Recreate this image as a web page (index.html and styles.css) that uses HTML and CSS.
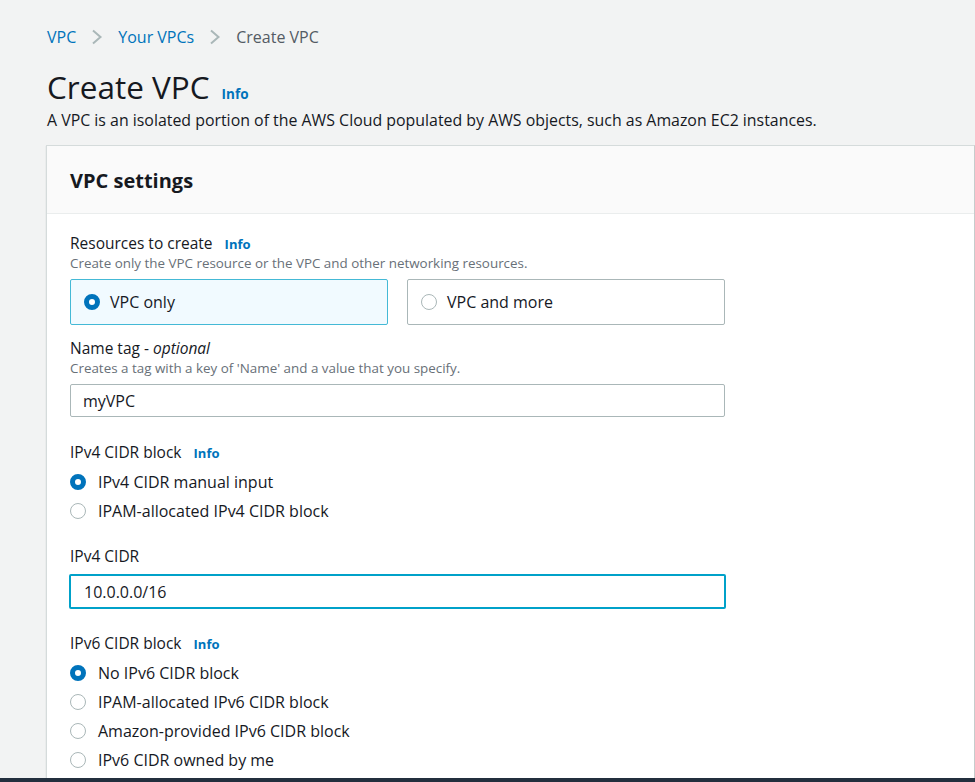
FILE: index.html
```html
<!DOCTYPE html>
<html lang="en">
<head>
<meta charset="utf-8">
<title>Create VPC</title>
<link rel="stylesheet" href="styles.css">
</head>
<body>
<div class="page">
  <nav class="crumbs">
    <a class="crumb-link">VPC</a>
    <svg class="chev" viewBox="0 0 12 16" width="12" height="16"><path d="M2 1.5l7.5 6.5-7.5 6.5" fill="none" stroke="#aab7b8" stroke-width="2"/></svg>
    <a class="crumb-link">Your VPCs</a>
    <svg class="chev" viewBox="0 0 12 16" width="12" height="16"><path d="M2 1.5l7.5 6.5-7.5 6.5" fill="none" stroke="#aab7b8" stroke-width="2"/></svg>
    <span class="crumb-current">Create VPC</span>
  </nav>
  <h1 class="title">Create VPC<span class="info info-title">Info</span></h1>
  <p class="lead">A VPC is an isolated portion of the AWS Cloud populated by AWS objects, such as Amazon EC2 instances.</p>

  <section class="panel">
    <header class="panel-head"><h2>VPC settings</h2></header>
    <div class="panel-body">
      <div class="field f-resources">
        <div class="label">Resources to create <span class="info">Info</span></div>
        <div class="desc">Create only the VPC resource or the VPC and other networking resources.</div>
        <div class="tiles">
          <div class="tile selected"><span class="radio on"></span><span>VPC only</span></div>
          <div class="tile"><span class="radio"></span><span>VPC and more</span></div>
        </div>
      </div>

      <div class="field f-name">
        <div class="label">Name tag - <em>optional</em></div>
        <div class="desc">Creates a tag with a key of 'Name' and a value that you specify.</div>
        <div class="input">myVPC</div>
      </div>

      <div class="field f-v4block">
        <div class="label">IPv4 CIDR block <span class="info">Info</span></div>
        <div class="radios">
          <div class="radio-row"><span class="radio on"></span>IPv4 CIDR manual input</div>
          <div class="radio-row"><span class="radio"></span>IPAM-allocated IPv4 CIDR block</div>
        </div>
      </div>

      <div class="field f-v4cidr">
        <div class="label">IPv4 CIDR</div>
        <div class="input focus">10.0.0.0/16</div>
      </div>

      <div class="field f-v6block">
        <div class="label">IPv6 CIDR block <span class="info">Info</span></div>
        <div class="radios">
          <div class="radio-row"><span class="radio on"></span>No IPv6 CIDR block</div>
          <div class="radio-row"><span class="radio"></span>IPAM-allocated IPv6 CIDR block</div>
          <div class="radio-row"><span class="radio"></span>Amazon-provided IPv6 CIDR block</div>
          <div class="radio-row"><span class="radio"></span>IPv6 CIDR owned by me</div>
        </div>
      </div>
    </div>
  </section>
</div>
<div class="footer-bar"></div>
</body>
</html>
```

FILE: styles.css
```css
html, body {
  margin: 0;
  padding: 0;
  height: 100%;
  overflow: hidden;
}
body {
  background: #f2f3f3;
  font-family: "Open Sans", "Noto Sans", sans-serif;
  color: #16191f;
  position: relative;
}
.page {
  padding: 27px 0 0 46px;
}
.crumbs {
  display: flex;
  align-items: center;
  gap: 15px;
  font-size: 16px;
  line-height: 20px;
  padding-left: 1px;
}
.crumb-link { color: #0073bb; }
.crumb-current { color: #545b64; }
.chev { display: block; }
.title {
  margin: 20px 0 0 1px;
  font-size: 31.5px;
  line-height: 40px;
  height: 40px;
  font-weight: 400;
}
.info {
  color: #0073bb;
  font-weight: 700;
  font-size: 13px;
  margin-left: 8px;
  line-height: 1;
}
.title .info { margin-left: 12px; font-size: 13.5px; }
.lead {
  margin: 3px 0 0 1px;
  font-size: 15.9px;
  line-height: 20px;
  height: 20px;
}
.panel {
  margin-top: 15px;
  background: #fff;
  border: 1px solid #d5dbdb;
  border-right-color: #c6cccc;
  box-shadow: 0 1px 1px rgba(0,28,36,0.2);
  height: 700px;
}
.panel-head {
  background: #fafafa;
  border-bottom: 1px solid #eaeded;
  height: 67px;
  display: flex;
  align-items: center;
  padding-left: 23px;
}
.panel-head h2 {
  margin: 0;
  font-size: 20px;
  font-weight: 700;
  line-height: 24px;
  padding-top: 2px;
}
.panel-body {
  padding: 19px 0 0 23px;
  width: 655px;
}
.label {
  font-size: 15.5px;
  line-height: 20px;
  height: 20px;
}
.label em { font-style: italic; }
.desc {
  font-size: 13.4px;
  line-height: 16px;
  color: #687078;
  margin-top: 2px;
}
.tiles {
  display: grid;
  grid-template-columns: 318px 318px;
  gap: 19px;
  margin-top: 8px;
}
.tile {
  height: 44px;
  border: 1px solid #aab7b8;
  border-radius: 2px;
  display: flex;
  align-items: center;
  gap: 10px;
  padding-left: 13px;
  font-size: 16px;
}
.tile.selected {
  background: #f1faff;
  border-color: #44b9d6;
}
.radio {
  width: 16px;
  height: 16px;
  box-sizing: border-box;
  border-radius: 50%;
  border: 1px solid #aab7b8;
  background: #fff;
  flex: none;
}
.radio.on {
  border: 5px solid #0073bb;
}
.f-name { margin-top: 13px; }
.input {
  margin-top: 8px;
  height: 33px;
  box-sizing: border-box;
  border: 1px solid #aab7b8;
  border-radius: 2px;
  display: flex;
  align-items: center;
  padding-left: 12px;
  font-size: 16px;
}
.input.focus {
  height: 35px;
  border: 2px solid #00a1c9;
  margin-left: -1px;
  margin-right: -1px;
  padding-left: 13px;
}
.f-v4block { margin-top: 25px; }
.radios { margin-top: 5px; }
.radio-row {
  display: flex;
  align-items: center;
  gap: 12px;
  height: 29px;
  font-size: 16px;
}
.f-v4cidr { margin-top: 21px; }
.f-v6block { margin-top: 24px; }
.footer-bar {
  position: absolute;
  left: 0;
  right: 0;
  bottom: 0;
  height: 4px;
  background: #232f3e;
}
```
